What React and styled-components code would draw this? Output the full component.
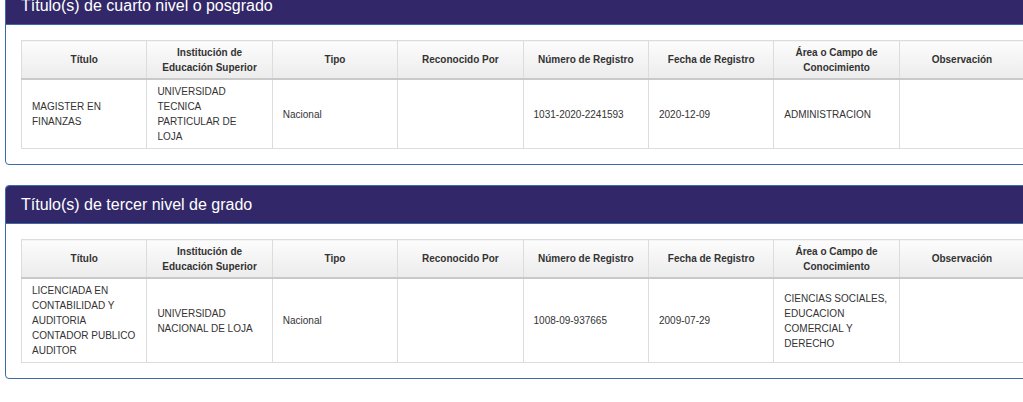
import styled, { createGlobalStyle } from 'styled-components';

const GlobalStyle = createGlobalStyle`
  html, body {
    margin: 0;
    padding: 0;
    background: #fff;
    overflow: hidden;
  }
  body {
    font-family: 'Liberation Sans', Arial, sans-serif;
    color: #333;
  }
`;

const Page = styled.div`
  width: 1060px;
  padding: 0 0 0 5px;
  margin-top: -14px;
`;

const Panel = styled.section`
  border: 1px solid #3a6ba6;
  border-radius: 4px;
  margin-bottom: 20px;
  background: #fff;
  overflow: hidden;
`;

const PanelHeading = styled.div`
  height: 37px;
  background: #322869;
  border-bottom: 1px solid #3a6ba6;
  display: flex;
  align-items: center;
  padding: 0 15px;
`;

const PanelTitle = styled.h3`
  margin: 0;
  font-size: 16px;
  font-weight: normal;
  color: #fff;
  line-height: 18px;
`;

const PanelBody = styled.div`
  padding: 15px;
`;

const Table = styled.table`
  border-collapse: collapse;
  table-layout: fixed;
  width: 1003px;
  font-size: 10px;
  line-height: 15px;
`;

const Th = styled.th`
  border: 1px solid #dcdcdc;
  border-bottom: 2px solid #c9c9c9;
  background: linear-gradient(to bottom, #fcfcfc 0%, #ececec 100%);
  font-weight: bold;
  color: #333;
  text-align: center;
  vertical-align: middle;
  padding: 3px 6px;
  height: 31px;
`;

const Td = styled.td`
  border: 1px solid #dcdcdc;
  padding: 4px 8px 4px 10px;
  vertical-align: middle;
  color: #333;
  text-align: left;
`;

const columns = [
  'Título',
  <>Institución de<br />Educación Superior</>,
  'Tipo',
  'Reconocido Por',
  'Número de Registro',
  'Fecha de Registro',
  <>Área o Campo de<br />Conocimiento</>,
  'Observación',
];

const TitleTable = ({ row }) => (
  <Table>
    <colgroup>
      {columns.map((_, i) => (
        <col key={i} style={{ width: '125.4px' }} />
      ))}
    </colgroup>
    <thead>
      <tr>
        {columns.map((c, i) => (
          <Th key={i}>{c}</Th>
        ))}
      </tr>
    </thead>
    <tbody>
      <tr>
        {row.map((v, i) => (
          <Td key={i}>{v}</Td>
        ))}
      </tr>
    </tbody>
  </Table>
);

const posgrado = [
  'MAGISTER EN FINANZAS',
  'UNIVERSIDAD TECNICA PARTICULAR DE LOJA',
  'Nacional',
  '',
  '1031-2020-2241593',
  '2020-12-09',
  'ADMINISTRACION',
  '',
];

const grado = [
  'LICENCIADA EN CONTABILIDAD Y AUDITORIA CONTADOR PUBLICO AUDITOR',
  'UNIVERSIDAD NACIONAL DE LOJA',
  'Nacional',
  '',
  '1008-09-937665',
  '2009-07-29',
  'CIENCIAS SOCIALES, EDUCACION COMERCIAL Y DERECHO',
  '',
];

export default function App() {
  return (
    <>
      <GlobalStyle />
      <Page>
        <Panel>
          <PanelHeading>
            <PanelTitle>Título(s) de cuarto nivel o posgrado</PanelTitle>
          </PanelHeading>
          <PanelBody>
            <TitleTable row={posgrado} />
          </PanelBody>
        </Panel>
        <Panel>
          <PanelHeading>
            <PanelTitle>Título(s) de tercer nivel de grado</PanelTitle>
          </PanelHeading>
          <PanelBody>
            <TitleTable row={grado} />
          </PanelBody>
        </Panel>
      </Page>
    </>
  );
}
